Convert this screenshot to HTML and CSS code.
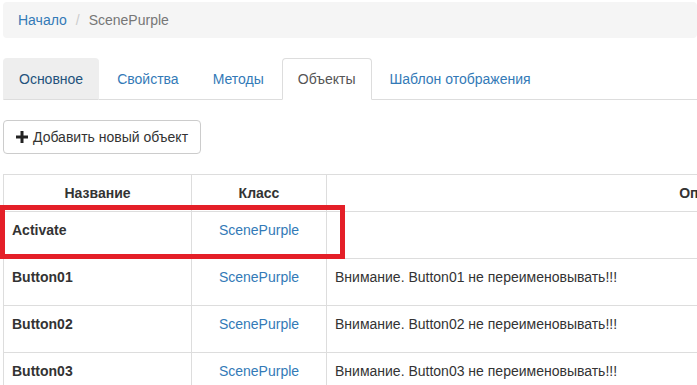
FILE: index.html
```html
<!DOCTYPE html>
<html lang="ru">
<head>
    <meta charset="UTF-8">
    <meta name="viewport" content="width=device-width, initial-scale=1.0">
    <title>ScenePurple</title>
    <link rel="stylesheet" href="styles.css">
</head>
<body>
    <div class="page">
        <ol class="breadcrumb">
            <li><a href="#">Начало</a></li>
            <li class="active">ScenePurple</li>
        </ol>

        <ul class="nav-tabs">
            <li class="tab-muted"><a href="#">Основное</a></li>
            <li><a href="#">Свойства</a></li>
            <li><a href="#">Методы</a></li>
            <li class="active"><a href="#">Объекты</a></li>
            <li><a href="#">Шаблон отображения</a></li>
        </ul>

        <div class="tab-content">
            <button class="btn">
                <svg class="icon-plus" width="12" height="12" viewBox="0 0 12 12">
                    <path d="M4.5 0h3v4.5H12v3H7.5V12h-3V7.5H0v-3h4.5z" fill="#222"/>
                </svg>
                Добавить новый объект
            </button>

            <div class="table-wrap">
                <table class="objects">
                    <thead>
                        <tr>
                            <th class="col-name">Название</th>
                            <th class="col-class">Класс</th>
                            <th class="col-desc">Описание</th>
                        </tr>
                    </thead>
                    <tbody>
                        <tr>
                            <td class="name">Activate</td>
                            <td class="cls"><a href="#">ScenePurple</a></td>
                            <td></td>
                        </tr>
                        <tr>
                            <td class="name">Button01</td>
                            <td class="cls"><a href="#">ScenePurple</a></td>
                            <td>Внимание. Button01 не переименовывать!!!</td>
                        </tr>
                        <tr>
                            <td class="name">Button02</td>
                            <td class="cls"><a href="#">ScenePurple</a></td>
                            <td>Внимание. Button02 не переименовывать!!!</td>
                        </tr>
                        <tr>
                            <td class="name">Button03</td>
                            <td class="cls"><a href="#">ScenePurple</a></td>
                            <td>Внимание. Button03 не переименовывать!!!</td>
                        </tr>
                    </tbody>
                </table>
                <div class="highlight"></div>
            </div>
        </div>
    </div>
</body>
</html>
```

FILE: styles.css
```css
* {
    box-sizing: border-box;
    margin: 0;
    padding: 0;
}

html, body {
    overflow: hidden;
}

body {
    font-family: "Liberation Sans", Arial, sans-serif;
    font-size: 14px;
    line-height: 20px;
    color: #333;
    background: #fff;
}

a {
    color: #337ab7;
    text-decoration: none;
}

.page {
    padding: 2px 0 0 3px;
}

.breadcrumb {
    display: flex;
    list-style: none;
    padding: 8px 15px;
    margin-bottom: 20px;
    background: #f5f5f5;
    border-radius: 4px;
    height: 36px;
}

.breadcrumb li + li::before {
    content: "/";
    padding: 0 9px;
    color: #ccc;
}

.breadcrumb .active {
    color: #777;
}

.nav-tabs {
    display: flex;
    list-style: none;
    border-bottom: 1px solid #ddd;
}

.nav-tabs li {
    margin-right: 2px;
    margin-bottom: -1px;
}

.nav-tabs a {
    display: block;
    padding: 10px 15px;
    border: 1px solid transparent;
    border-radius: 4px 4px 0 0;
}

.nav-tabs .tab-muted a {
    background: #eee;
    border-color: #eee #eee #ddd;
    color: #23527c;
}

.nav-tabs .active a {
    color: #555;
    background: #fff;
    border-color: #ddd #ddd transparent;
}

.tab-content {
    padding-top: 20px;
}

.btn {
    display: inline-flex;
    align-items: center;
    gap: 5px;
    height: 34px;
    padding: 6px 12px;
    font-family: inherit;
    font-size: 14px;
    color: #333;
    background: #fff;
    border: 1px solid #ccc;
    border-radius: 4px;
}

.icon-plus {
    margin-top: -1px;
}

.table-wrap {
    position: relative;
    margin-top: 20px;
}

.objects {
    border-collapse: collapse;
    width: 1098px;
    table-layout: fixed;
}

.objects th,
.objects td {
    border: 1px solid #ddd;
    padding: 8px;
    vertical-align: top;
    text-align: left;
}

.objects th {
    text-align: center;
    height: 37px;
}

.objects td {
    height: 47px;
}

.col-name { width: 188px; }
.col-class { width: 135px; }

.objects .name {
    font-weight: bold;
}

.objects .cls {
    text-align: center;
}

.highlight {
    position: absolute;
    left: -3px;
    top: 31px;
    width: 345px;
    height: 54px;
    border: 5px solid #e41f28;
}
```
